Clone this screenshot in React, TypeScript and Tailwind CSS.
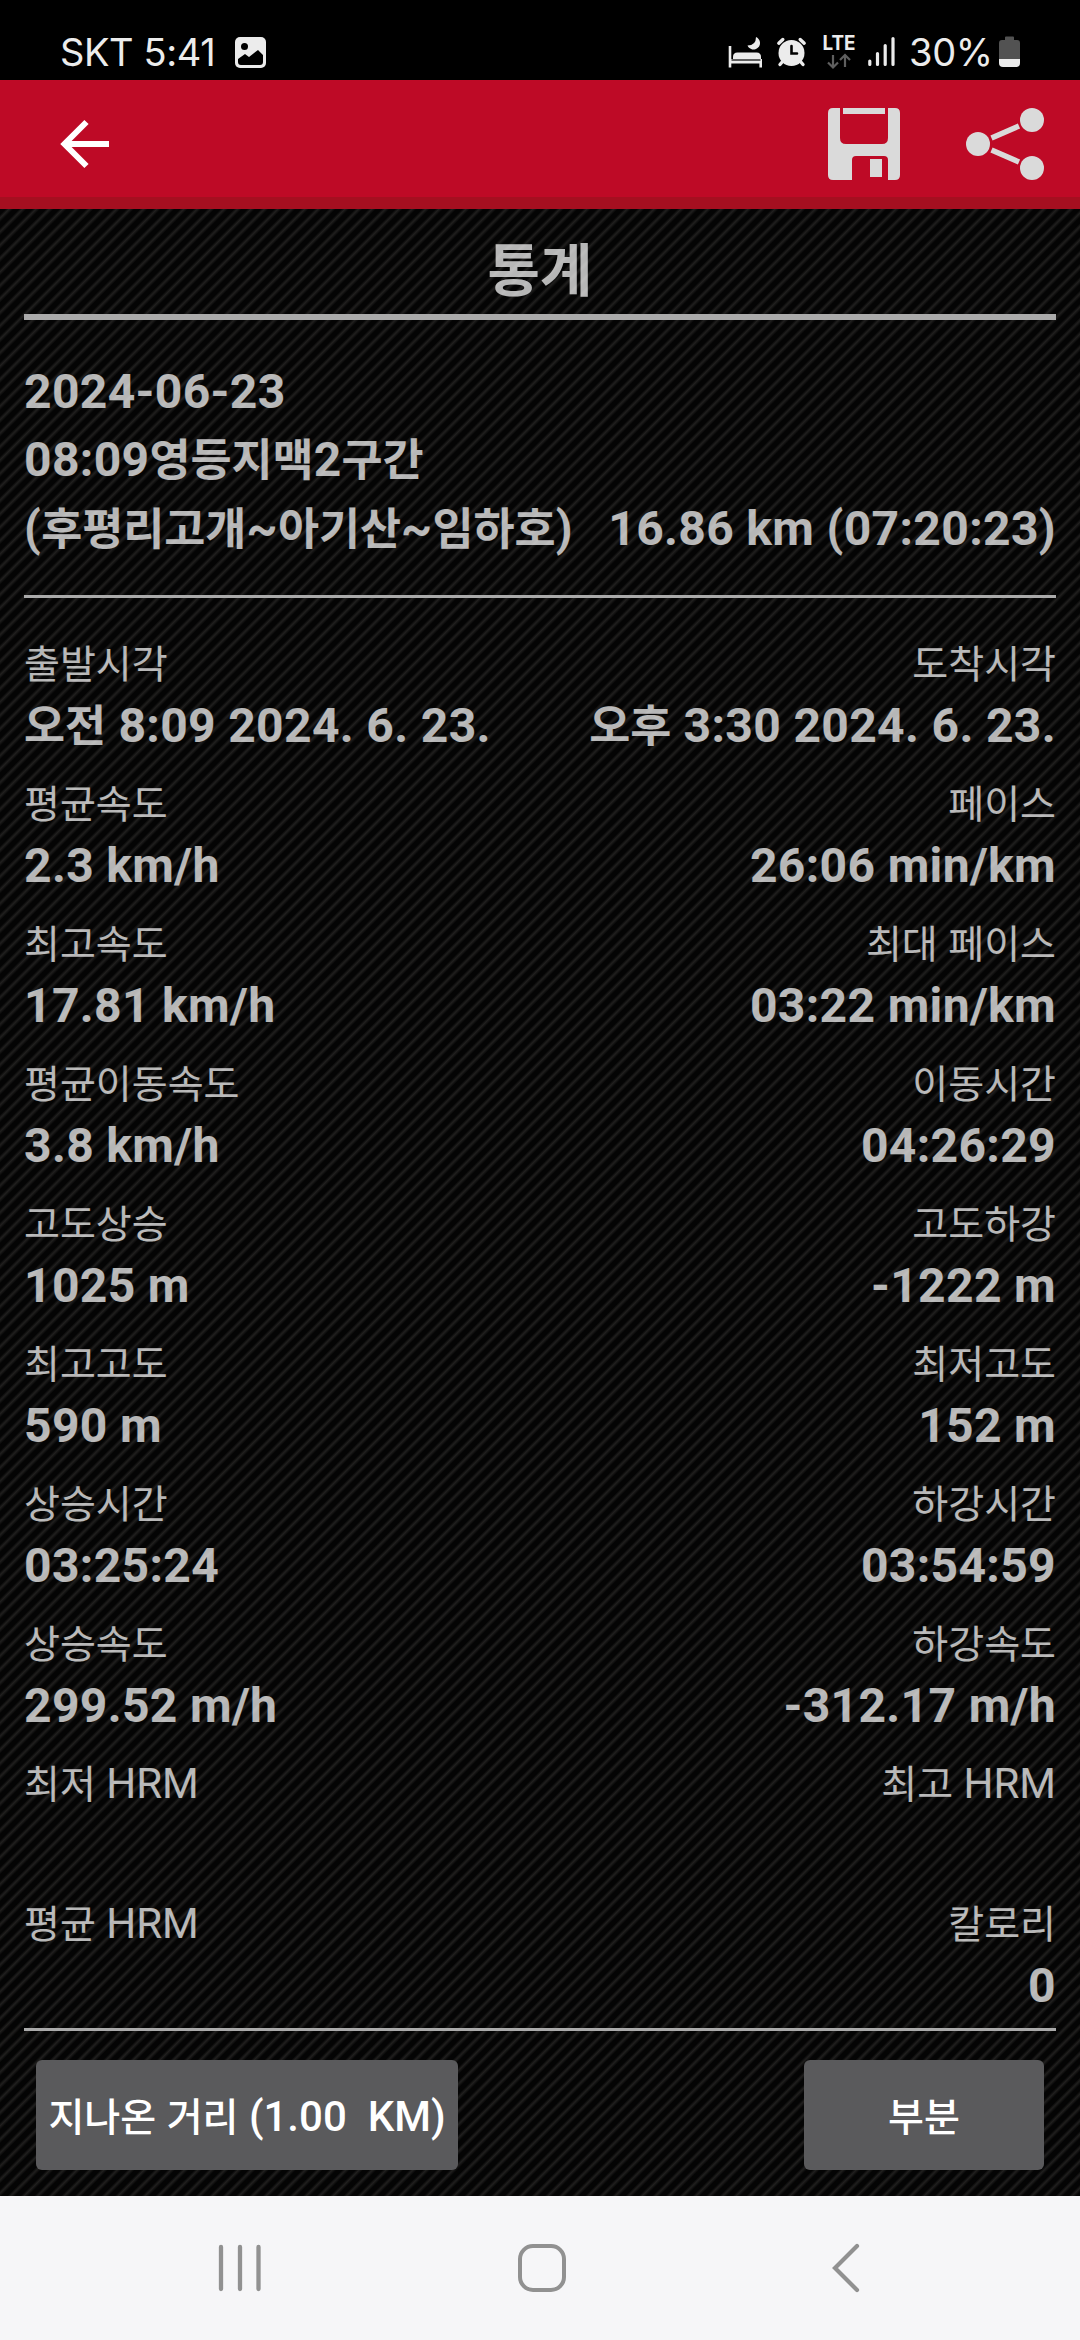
import React from 'react';

type Stat = { label: string; value: string };

const rows: [Stat, Stat][] = [
  [{ label: '출발시각', value: '오전 8:09 2024. 6. 23.' }, { label: '도착시각', value: '오후 3:30 2024. 6. 23.' }],
  [{ label: '평균속도', value: '2.3 km/h' }, { label: '페이스', value: '26:06 min/km' }],
  [{ label: '최고속도', value: '17.81 km/h' }, { label: '최대 페이스', value: '03:22 min/km' }],
  [{ label: '평균이동속도', value: '3.8 km/h' }, { label: '이동시간', value: '04:26:29' }],
  [{ label: '고도상승', value: '1025 m' }, { label: '고도하강', value: '-1222 m' }],
  [{ label: '최고고도', value: '590 m' }, { label: '최저고도', value: '152 m' }],
  [{ label: '상승시간', value: '03:25:24' }, { label: '하강시간', value: '03:54:59' }],
  [{ label: '상승속도', value: '299.52 m/h' }, { label: '하강속도', value: '-312.17 m/h' }],
  [{ label: '최저 HRM', value: '' }, { label: '최고 HRM', value: '' }],
  [{ label: '평균 HRM', value: '' }, { label: '칼로리', value: '0' }],
];

// Hangul is set slightly smaller than the Latin text beside it
const Mixed = ({ text }: { text: string }) => (
  <>
    {text.split(/([가-힣]+)/).map((part, i) =>
      i % 2 ? (
        <span key={i} className="text-[0.93em] tracking-normal">{part}</span>
      ) : (
        part
      )
    )}
  </>
);

const StatusBar = () => (
  <div className="flex h-20 shrink-0 items-start bg-black pl-[60px] text-[#ececec]">
    <span className="mt-[32px] w-[156px] whitespace-nowrap font-['Inter'] text-[38px] leading-[40px] tracking-[-0.4px]">SKT 5:41</span>
    <svg className="ml-[19px] mt-[37px]" width="31" height="31" viewBox="0 0 31 31">
      <rect width="31" height="31" rx="5" fill="#ececec" />
      <circle cx="9.5" cy="9.5" r="3.5" fill="#000" />
      <path d="M3 22l7-5 4 3 9-7 5 5v7q0 3-3 3H6q-3 0-3-3z" fill="#000" />
    </svg>
    <div className="flex-1" />
    <svg className="mt-[30px]" width="182" height="45" viewBox="719 30 182 45">
      {/* bed with moon */}
      <g fill="#ececec">
        <path d="M727.700 46h2.600v13h30.700v8.500h-2.600v-4h-28.100v4h-2.600z" />
        <path d="M732 59v-2q0-4.500 4.500-4.500h19q4.500 0 4.500 4.500v2z" />
        <path d="M755 37a6.500 6.500 0 1 1-8.500 8.500Q755 45.500 755 37z" />
      </g>
      <path d="M730.500 60h29" stroke="#000" strokeWidth="1.200" />
      {/* alarm */}
      <circle cx="790.500" cy="53" r="13" fill="#ececec" />
      <path d="M777.800 43.200l4-3.700M803.200 43.200l-4-3.700M782 61l-3 3.500M799 61l3 3.500" stroke="#ececec" strokeWidth="3.400" strokeLinecap="round" />
      <path d="M790.500 46v7.500h5.500" fill="none" stroke="#000" strokeWidth="2.600" strokeLinecap="round" />
      <text x="821.500" y="50.300" fill="#ececec" fontFamily="Inter, sans-serif" fontSize="19.500" fontWeight="700" textLength="33" lengthAdjust="spacingAndGlyphs">LTE</text>
      <path d="M832 55v12M827 62.500l5 5 5-5M844 67V55M839 60l5-5 5 5" fill="none" stroke="#5f5f5f" strokeWidth="2.200" />
      <path d="M868.800 61v3.500M876.500 53.500v11M884.200 45.500v19M892 38.500v26" stroke="#ececec" strokeWidth="3.200" strokeLinecap="round" />
    </svg>
    <span className="ml-[7px] mt-[32px] w-[83px] whitespace-nowrap font-['Inter'] text-[38px] leading-[40px] tracking-[-0.3px]">30%</span>
    <svg className="ml-[7px] mr-[60px] mt-[36px]" width="21" height="31" viewBox="0 0 21 31">
      <path d="M6 1.500Q6 .5 7 .5h7q1 0 1 1V4h3q3 0 3 3v16H0V7q0-3 3-3h3z" fill="#525252" />
      <path d="M0 23h21v4q0 4-4 4H4q-4 0-4-4z" fill="#ececec" />
    </svg>
  </div>
);

const Toolbar = () => (
  <header className="flex h-[129px] shrink-0 items-center justify-between border-b-12 border-[#a50f20] bg-[#be0a26] pl-[60px] pr-[36px]">
    <svg className="mt-[11px]" width="50" height="50" viewBox="0 0 50 50" fill="none" stroke="#fff" strokeWidth="6">
      <path d="M26.500 3L4.500 25l22 22M5 25h44" />
    </svg>
    <div className="mt-[11px] flex items-center gap-[66px] text-[#dadada]">
      <svg width="72" height="72" viewBox="0 0 72 72" fill="currentColor">
        <path d="M5 0h7v30q0 6 6 6h36q6 0 6-6V0h7q5 0 5 5v62q0 5-5 5h-7V52q0-4-4-4H28q-4 0-4 4v20H5q-5 0-5-5V5q0-5 5-5z" />
        <path d="M15 0h42v6H15zM42 51h12v18H42z" />
      </svg>
      <svg width="78" height="72" viewBox="0 0 78 72" fill="currentColor">
        <circle cx="12" cy="36" r="12" />
        <circle cx="66" cy="12" r="12" />
        <circle cx="66" cy="60" r="12" />
        <path d="M25.500 30L53 18M25.500 42L53 54" stroke="currentColor" strokeWidth="5.500" />
      </svg>
    </div>
  </header>
);

const StatCell = ({ label, value }: Stat) => (
  <div>
    <p className="h-[59px] text-[42px] leading-[56px]">
      <Mixed text={label} />
    </p>
    <p className="h-[81px] text-[48px] font-bold leading-[62px] tracking-[0.35px]">
      <Mixed text={value} />
    </p>
  </div>
);

const NavBar = () => (
  <nav className="flex h-36 shrink-0 items-center bg-[#f6f6f8] pl-[218px]">
    <svg width="44" height="48" viewBox="0 0 44 48" stroke="#919191" strokeWidth="4.300" strokeLinecap="round">
      <path d="M3 3v42M22 3v42M40.500 3v42" />
    </svg>
    <div className="ml-[256px] size-[48px] rounded-[15px] border-4 border-[#919191]" />
    <svg className="ml-[265px]" width="30" height="50" viewBox="0 0 30 50" fill="none" stroke="#919191" strokeWidth="4.200" strokeLinecap="round">
      <path d="M26 3L4 25l22 22" />
    </svg>
  </nav>
);

const App = () => {
  return (
    <div className="flex h-[2340px] w-[1080px] flex-col overflow-hidden font-['Roboto','Noto_Sans_CJK_KR',sans-serif]">
      <StatusBar />
      <Toolbar />
      <main className="flex-1 bg-[#040404] bg-[repeating-linear-gradient(135deg,#040404_0px,#040404_4px,#201f1e_6.500px,#040404_9.500px)] px-6 text-white/71">
        <h1 className="h-[105px] text-center text-[57px] font-bold leading-[126px]">통계</h1>
        <hr className="h-[6px] border-0 bg-[#aaaaaa]" />
        <div className="flex h-[275px] items-end justify-between pb-[31px] text-[48px] font-bold leading-[68px] tracking-[0.35px]">
          <p className="whitespace-nowrap">
            2024-06-23
            <br />
            <Mixed text="08:09영등지맥2구간" />
            <br />
            <Mixed text="(후평리고개~아기산~임하호)" />
          </p>
          <p className="mb-[1px] whitespace-nowrap">16.86 km (07:20:23)</p>
        </div>
        <hr className="h-[3px] border-0 bg-[#aaaaaa]" />
        <div className="h-[1430px] pt-[38px]">
          {rows.map(([left, right]) => (
            <div key={left.label} className="flex h-[140px] justify-between">
              <StatCell {...left} />
              <div className="text-right">
                <StatCell {...right} />
              </div>
            </div>
          ))}
        </div>
        <hr className="h-[3px] border-0 bg-[#aaaaaa]" />
        <div className="flex justify-between px-3 pt-[29px] text-[42px] font-medium text-white">
          <button className="h-[110px] w-[422px] whitespace-pre rounded-md bg-[#5a5a5c] pt-[2px]">
            <Mixed text="지나온 거리 (1.00  KM)" />
          </button>
          <button className="h-[110px] w-[240px] rounded-md bg-[#5a5a5c] pt-[2px]">
            <Mixed text="부분" />
          </button>
        </div>
      </main>
      <NavBar />
    </div>
  );
};

export default App;
